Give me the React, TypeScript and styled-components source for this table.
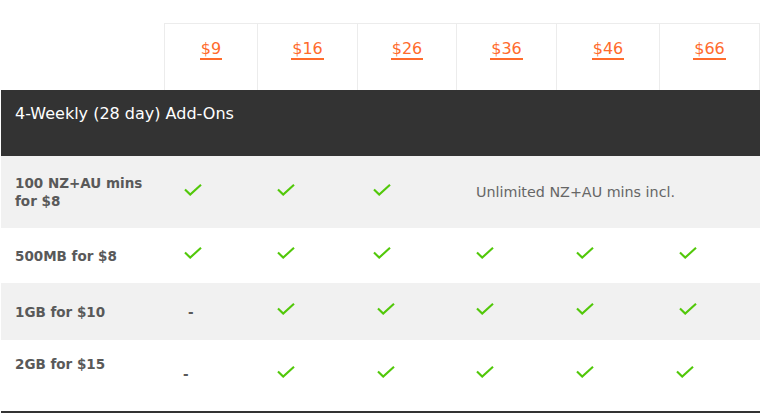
import React from "react";
import styled, { createGlobalStyle } from "styled-components";

const GlobalStyle = createGlobalStyle`
  html, body { margin: 0; padding: 0; background: #ffffff; }
  body { font-family: "DejaVu Sans", Verdana, sans-serif; }
`;

const COLS = "163px 93px 100px 99px 100px 103px 101px";
const CHECK_PAD = [20, 20, 16, 20, 20, 20];

const Table = styled.div`
  width: 759px;
  margin-left: 1px;
  padding-top: 23px;
`;

const HeaderRow = styled.div`
  display: grid;
  grid-template-columns: ${COLS};
  height: 67px;
`;

const BlankCell = styled.div``;

const PriceCell = styled.div<{ $last?: boolean }>`
  box-sizing: border-box;
  border-top: 1px solid #ececec;
  border-left: 1px solid #ececec;
  border-right: ${(p) => (p.$last ? "1px solid #ececec" : "none")};
  padding-top: 15px;
  text-align: center;
`;

const Price = styled.a`
  display: inline-block;
  font-size: 16px;
  line-height: 19px;
  color: #ff6b2c;
  text-decoration: none;
  border-bottom: 2px solid #ff6b2c;
  padding: 0 1px;
`;

const SectionBar = styled.div`
  box-sizing: border-box;
  height: 66px;
  background: #333333;
  color: #ffffff;
  font-size: 16px;
  line-height: 20px;
  padding: 14px 14px 0;
`;

const Row = styled.div<{ $shade?: boolean; $h: number; $top?: boolean }>`
  display: grid;
  grid-template-columns: ${COLS};
  height: ${(p) => p.$h}px;
  align-items: ${(p) => (p.$top ? "start" : "center")};
  background: ${(p) => (p.$shade ? "#f1f1f1" : "#ffffff")};
`;

const Label = styled.div<{ $pt?: number }>`
  padding: ${(p) => p.$pt ?? 0}px 10px 0 14px;
  font-size: 13.5px;
  line-height: 18px;
  font-weight: bold;
  color: #595959;
`;

const Cell = styled.div<{ $pl: number; $pt?: number }>`
  display: flex;
  align-items: center;
  padding-left: ${(p) => p.$pl}px;
  padding-top: ${(p) => p.$pt ?? 0}px;
`;

const CheckIcon = styled.svg<{ $lift?: boolean }>`
  display: block;
  width: 18px;
  height: 12px;
  margin-bottom: ${(p) => (p.$lift ? 5 : 0)}px;
`;

const Dash = styled.span`
  font-size: 13.5px;
  line-height: 18px;
  font-weight: bold;
  color: #595959;
`;

const Note = styled.div`
  grid-column: 5 / -1;
  padding-left: 20px;
  font-size: 14.3px;
  line-height: 18px;
  color: #666666;
`;

const BottomRule = styled.div`
  height: 2px;
  background: #333333;
`;

const Check = ({ lift = true }: { lift?: boolean }) => (
  <CheckIcon $lift={lift} viewBox="0 0 18 12" aria-hidden="true">
    <polyline
      points="1,5.5 6.2,10.6 17,0.8"
      fill="none"
      stroke="#52c80a"
      strokeWidth="2.1"
    />
  </CheckIcon>
);

type Mark = "check" | "dash";

const prices = ["$9", "$16", "$26", "$36", "$46", "$66"];

const rows: { label: React.ReactNode; marks: Mark[]; h: number; shade: boolean }[] = [
  { label: "500MB for $8", marks: ["check", "check", "check", "check", "check", "check"], h: 55, shade: false },
  { label: "1GB for $10", marks: ["dash", "check", "check", "check", "check", "check"], h: 57, shade: true },
];

export default function App() {
  return (
    <>
      <GlobalStyle />
      <Table>
        <HeaderRow>
          <BlankCell />
          {prices.map((p, i) => (
            <PriceCell key={p} $last={i === prices.length - 1}>
              <Price href="#">{p}</Price>
            </PriceCell>
          ))}
        </HeaderRow>

        <SectionBar>4-Weekly (28 day) Add-Ons</SectionBar>

        <Row $shade $h={72}>
          <Label>100 NZ+AU mins for $8</Label>
          {[0, 1, 2].map((i) => (
            <Cell key={i} $pl={CHECK_PAD[i]}>
              <Check />
            </Cell>
          ))}
          <Note>Unlimited NZ+AU mins incl.</Note>
        </Row>

        {rows.map((r, ri) => (
          <Row key={ri} $shade={r.shade} $h={r.h}>
            <Label>{r.label}</Label>
            {r.marks.map((m, i) =>
              m === "check" ? (
                <Cell key={i} $pl={CHECK_PAD[i] + (ri === 1 && i === 2 ? 4 : 0)}>
                  <Check />
                </Cell>
              ) : (
                <Cell key={i} $pl={24}>
                  <Dash>-</Dash>
                </Cell>
              )
            )}
          </Row>
        ))}

        <Row $h={71} $top>
          <Label $pt={15}>2GB for $15</Label>
          <Cell $pl={19} $pt={25}>
            <Dash>-</Dash>
          </Cell>
          {[1, 2, 3, 4, 5].map((i) => (
            <Cell key={i} $pl={CHECK_PAD[i] + (i === 2 ? 4 : 0) - (i === 5 ? 3 : 0)} $pt={26}>
              <Check lift={false} />
            </Cell>
          ))}
        </Row>
        <BottomRule />
      </Table>
    </>
  );
}
